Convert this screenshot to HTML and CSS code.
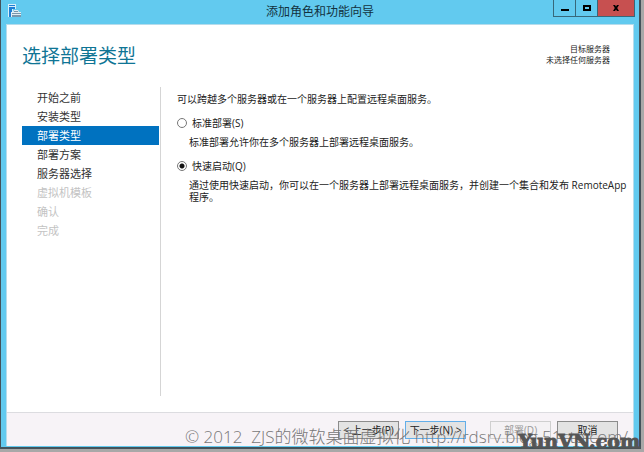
FILE: index.html
```html
<!DOCTYPE html>
<html lang="zh-CN">
<head>
<meta charset="utf-8">
<title>添加角色和功能向导</title>
<link rel="stylesheet" href="styles.css">
</head>
<body>
<div class="window">
  <header class="titlebar">
    <svg class="app-icon" viewBox="0 0 14 14" aria-hidden="true">
      <path d="M0 0h8v5H5v8H0z" fill="#d5effa"/>
      <path d="M1 1h6v1H1zM1 3h6v2H4v8H1z" fill="#1f7fd4"/>
      <path d="M3 13V8h2l1-2h4l1 2h2v5z" fill="#e3eef4"/>
      <path d="M4 9h9v1H4zM4 11h9v2H4zM6 7h4v1H6z" fill="#7797ad"/>
    </svg>
    <h1 class="caption">添加角色和功能向导</h1>
    <div class="controls">
      <button class="control" type="button" aria-label="最小化"><svg viewBox="0 0 10 8"><path d="M1 5h8v2H1z"/></svg></button>
      <button class="control" type="button" aria-label="最大化"><svg viewBox="0 0 10 8"><path d="M1 1h8v6H1zM3 3v2h4V3z" fill-rule="evenodd"/></svg></button>
      <button class="control close" type="button" aria-label="关闭"><svg viewBox="0 0 10 8"><path d="M2 1h2l1 1.500L6 1h2L6.200 4 8 7H6L5 5.500 4 7H2l1.800-3z"/></svg></button>
    </div>
  </header>
  <main class="wizard">
    <div class="heading">
      <h2 class="page-title">选择部署类型</h2>
      <p class="target">目标服务器<br>未选择任何服务器</p>
    </div>
    <div class="content">
      <nav class="steps">
        <a class="step" href="#">开始之前</a>
        <a class="step" href="#">安装类型</a>
        <a class="step current" href="#" aria-current="step">部署类型</a>
        <a class="step" href="#">部署方案</a>
        <a class="step" href="#">服务器选择</a>
        <a class="step disabled" aria-disabled="true">虚拟机模板</a>
        <a class="step disabled" aria-disabled="true">确认</a>
        <a class="step disabled" aria-disabled="true">完成</a>
      </nav>
      <section class="panel">
        <p class="intro">可以跨越多个服务器或在一个服务器上配置远程桌面服务。</p>
        <div class="option">
          <input class="radio" type="radio" name="deployment" id="standard">
          <label for="standard">标准部署(S)</label>
          <p class="detail">标准部署允许你在多个服务器上部署远程桌面服务。</p>
        </div>
        <div class="option">
          <input class="radio" type="radio" name="deployment" id="quick" checked>
          <label for="quick">快速启动(Q)</label>
          <p class="detail">通过使用快速启动，你可以在一个服务器上部署远程桌面服务，并创建一个集合和发布 RemoteApp 程序。</p>
        </div>
      </section>
    </div>
    <footer class="actions">
      <button class="action" type="button">&lt; 上一步(P)</button>
      <button class="action next" type="button">下一步(N) &gt;</button>
      <button class="action deploy" type="button" disabled>部署(D)</button>
      <button class="action" type="button">取消</button>
    </footer>
  </main>
</div>
<div class="credit">© 2012&nbsp; ZJS的微软桌面虚拟化 http://rdsrv.blog.51cto.com/</div>
<div class="site-mark">YunVN.com</div>
</body>
</html>
```
FILE: styles.css
```css
* {
  box-sizing: border-box;
}

body {
  position: relative;
  display: flex;
  min-height: 100vh;
  margin: 0;
  padding: 0 3px 3px 0;
  background: #a8a8a8;
  color: #222;
  font: 10px/12px "Open Sans", "Noto Sans CJK SC", sans-serif;
}

h1, h2, p {
  margin: 0;
  font-weight: 400;
}

button {
  padding: 0;
  font: inherit;
}

.window {
  flex: 1;
  display: flex;
  flex-direction: column;
  min-width: 0;
  padding: 0 5px 1px;
  background: #62caef;
  border: solid #44525a;
  border-width: 0 2px 2px 1px;
}

.titlebar {
  display: grid;
  grid-template-columns: 1fr auto 1fr;
  height: 24px;
}

.app-icon {
  width: 14px;
  height: 14px;
  margin: 4px 2px;
}

.caption {
  color: #12323e;
  font-size: 12px;
  line-height: 24px;
}

.controls {
  display: flex;
  justify-self: end;
  height: 17px;
  margin-right: -1px;
  border: 1px solid #37687a;
  border-top: 0;
}

.control {
  display: grid;
  place-items: center;
  width: 22px;
  background: none;
  border: 0;
  border-right: 1px solid #37687a;
}

.control svg {
  width: 10px;
  height: 8px;
}

.close {
  width: 36px;
  background: #c75050;
  border-right: 0;
}

.wizard {
  flex: 1;
  display: flex;
  flex-direction: column;
  background: #fff;
  border: 1px solid #b5dcec;
  border-bottom: 0;
}

.heading {
  display: flex;
  justify-content: space-between;
  padding: 18px 23px 0 15px;
}

.page-title {
  color: #0f7595;
  font-size: 19px;
  line-height: 26px;
}

.target {
  font-size: 8px;
  line-height: 11px;
  text-align: right;
}

.content {
  flex: 1;
  display: flex;
  padding: 18px 0 16px 15px;
}

.steps {
  width: 139px;
  padding-top: 1px;
  border-right: 1px solid #d5d5d5;
}

.step {
  display: block;
  width: 137px;
  padding-left: 15px;
  color: #333;
  font-size: 11px;
  line-height: 19px;
  text-decoration: none;
}

.current {
  background: #0072c0;
  color: #fff;
}

.disabled {
  color: #c3c3c3;
}

.panel {
  flex: 1;
  padding: 6px 0 0 16px;
}

.option {
  display: grid;
  grid-template-columns: 10px 1fr;
  column-gap: 5px;
  row-gap: 7px;
  align-items: center;
  margin-top: 12px;
}

.radio {
  appearance: none;
  width: 10px;
  height: 10px;
  margin: 0;
  background: #fff;
  border: 1px solid #777;
  border-radius: 50%;
}

.radio:checked {
  background: radial-gradient(circle, #111 0 2px, #fff 3px);
}

.detail {
  grid-column: 1 / -1;
  padding-left: 12px;
}

.actions {
  display: flex;
  justify-content: flex-end;
  gap: 6px;
  height: 34px;
  padding: 8px 15px 7px;
  background: #f7f3f7;
  border-top: 1px solid #dcdce0;
}

.action {
  width: 61px;
  background: #e3e3e3;
  border: 1px solid #8c8c8c;
  color: #222;
}

.next {
  border-color: #63aee8;
}

.deploy {
  margin-left: 18px;
  background: #f4f2f4;
  border-color: #cfcfcf;
  color: #999;
}

.credit {
  position: absolute;
  right: 16px;
  bottom: 4px;
  color: #777;
  font-size: 17px;
  font-weight: 300;
  line-height: 22px;
  white-space: pre;
}

.site-mark {
  position: absolute;
  right: 4px;
  bottom: 1px;
  color: #555;
  font: 700 19px/20px "DejaVu Serif", serif;
  -webkit-text-stroke: 1px #555;
}
```
